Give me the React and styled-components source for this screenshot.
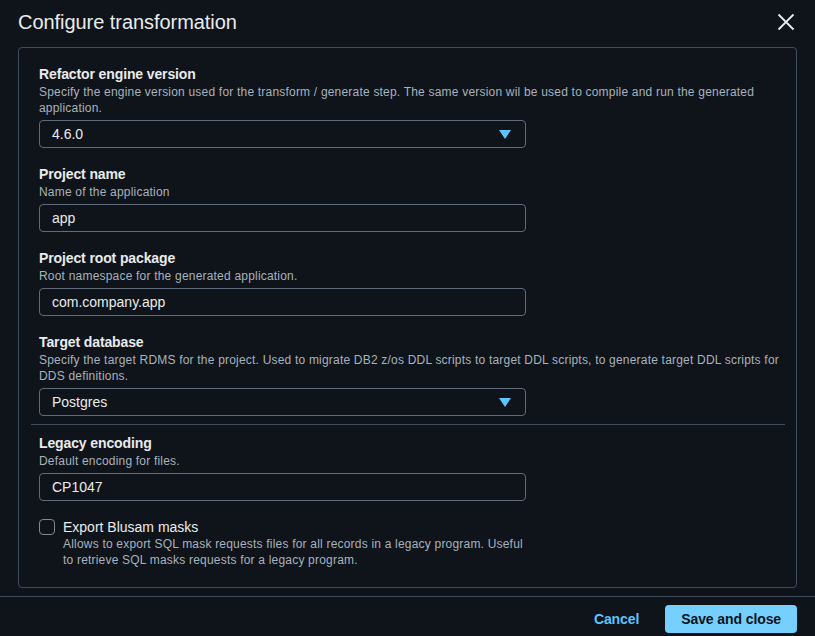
import styled, { createGlobalStyle } from 'styled-components';

const Global = createGlobalStyle`
  html, body {
    margin: 0;
    padding: 0;
    background: #0f141a;
  }
  body {
    font-family: "Liberation Sans", Arial, sans-serif;
    color: #e9ebed;
  }
`;

const Modal = styled.div`
  width: 815px;
  height: 636px;
  display: flex;
  flex-direction: column;
  background: #0f141a;
  overflow: hidden;
`;
const Header = styled.div`
  height: 47px;
  display: flex;
  align-items: center;
  justify-content: space-between;
  padding: 0 20px 0 18px;
  box-sizing: border-box;
`;
const Title = styled.h2`
  margin: 0;
  font-size: 20px;
  font-weight: 400;
  letter-spacing: -0.05px;
  color: #e9ebed;
  padding-bottom: 2px;
`;
const CloseButton = styled.button`
  background: none;
  border: 0;
  padding: 0;
  width: 18px;
  height: 18px;
  color: #e9ebed;
  display: flex;
  cursor: pointer;
  margin-bottom: 3px;
`;
const Container = styled.div`
  margin: 0 18px;
  border: 1px solid #414d5c;
  border-radius: 4px;
  padding: 16px 12px 18px 20px;
  height: 541px;
  box-sizing: border-box;
`;
const Field = styled.div`
  display: flex;
  flex-direction: column;
  margin-bottom: ${p => p.$gap ?? 16}px;
`;
const Label = styled.label`
  font-size: 14px;
  font-weight: 700;
  line-height: 20px;
  letter-spacing: -0.12px;
  color: #e9ebed;
`;
const Description = styled.div`
  font-size: 12px;
  line-height: 16px;
  color: #a8b2bd;
  letter-spacing: 0.2px;
  margin-bottom: 4px;
  padding-right: 2px;
`;
const Box = styled.div`
  width: 487px;
  height: 28px;
  box-sizing: border-box;
  border: 1px solid #5f6b7a;
  border-radius: 4px;
  display: flex;
  align-items: center;
  justify-content: space-between;
  padding: 0 14px 0 12px;
  font-size: 14px;
  color: #e9ebed;
  letter-spacing: 0;
`;
const Caret = styled.span`
  width: 0;
  height: 0;
  border-left: 6px solid transparent;
  border-right: 6px solid transparent;
  border-top: 9px solid #5ec3ff;
`;
const Divider = styled.hr`
  border: 0;
  border-top: 1px solid #414d5c;
  margin: 8px 0 8px -8px;
  width: 754px;
`;
const CheckRow = styled.div`
  display: flex;
  gap: 8px;
  margin-top: 17px;
`;
const CheckBox = styled.span`
  width: 16px;
  height: 16px;
  box-sizing: border-box;
  border: 1.5px solid #7d8998;
  border-radius: 4px;
  flex-shrink: 0;
  margin-top: 1px;
`;
const CheckText = styled.div`
  display: flex;
  flex-direction: column;
  width: 466px;
`;
const CheckLabel = styled.div`
  font-size: 14px;
  line-height: 18px;
  letter-spacing: 0;
  color: #e9ebed;
`;
const Footer = styled.div`
  margin-top: 8px;
  border-top: 1px solid #414d5c;
  flex: 1;
  display: flex;
  justify-content: flex-end;
  align-items: flex-start;
  gap: 26px;
  padding: 8px 18px 0 0;
`;
const LinkButton = styled.button`
  background: none;
  border: 0;
  font: inherit;
  height: 28px;
  font-size: 14px;
  font-weight: 700;
  letter-spacing: -0.1px;
  color: #5ec3ff;
  padding: 0;
  cursor: pointer;
`;
const PrimaryButton = styled.button`
  background: #75cfff;
  border: 0;
  border-radius: 4px;
  height: 28px;
  padding: 0 16px;
  font: inherit;
  font-size: 14px;
  font-weight: 700;
  letter-spacing: -0.1px;
  color: #0f141a;
  cursor: pointer;
`;

function SelectField({ label, desc, value, gap }) {
  return (
    <Field $gap={gap}>
      <Label>{label}</Label>
      <Description>{desc}</Description>
      <Box>
        {value}
        <Caret />
      </Box>
    </Field>
  );
}

function InputField({ label, desc, value, gap }) {
  return (
    <Field $gap={gap}>
      <Label>{label}</Label>
      <Description>{desc}</Description>
      <Box>{value}</Box>
    </Field>
  );
}

export default function App() {
  return (
    <Modal>
      <Global />
      <Header>
        <Title>Configure transformation</Title>
        <CloseButton aria-label="Close">
          <svg width="18" height="18" viewBox="0 0 18 18" fill="none" stroke="currentColor" strokeWidth="1.8">
            <path d="M1.5 1.5l15 15M16.5 1.5l-15 15" />
          </svg>
        </CloseButton>
      </Header>
      <Container>
        <SelectField
          label="Refactor engine version"
          desc="Specify the engine version used for the transform / generate step. The same version wil be used to compile and run the generated application."
          value="4.6.0"
        />
        <InputField label="Project name" desc="Name of the application" value="app" />
        <InputField
          label="Project root package"
          desc="Root namespace for the generated application."
          value="com.company.app"
        />
        <SelectField
          label="Target database"
          desc="Specify the target RDMS for the project. Used to migrate DB2 z/os DDL scripts to target DDL scripts, to generate target DDL scripts for DDS definitions."
          value="Postgres"
          gap={0}
        />
        <Divider />
        <InputField label="Legacy encoding" desc="Default encoding for files." value="CP1047" gap={0} />
        <CheckRow>
          <CheckBox />
          <CheckText>
            <CheckLabel>Export Blusam masks</CheckLabel>
            <Description>
              Allows to export SQL mask requests files for all records in a legacy program. Useful to retrieve SQL masks requests for a legacy program.
            </Description>
          </CheckText>
        </CheckRow>
      </Container>
      <Footer>
        <LinkButton>Cancel</LinkButton>
        <PrimaryButton>Save and close</PrimaryButton>
      </Footer>
    </Modal>
  );
}
